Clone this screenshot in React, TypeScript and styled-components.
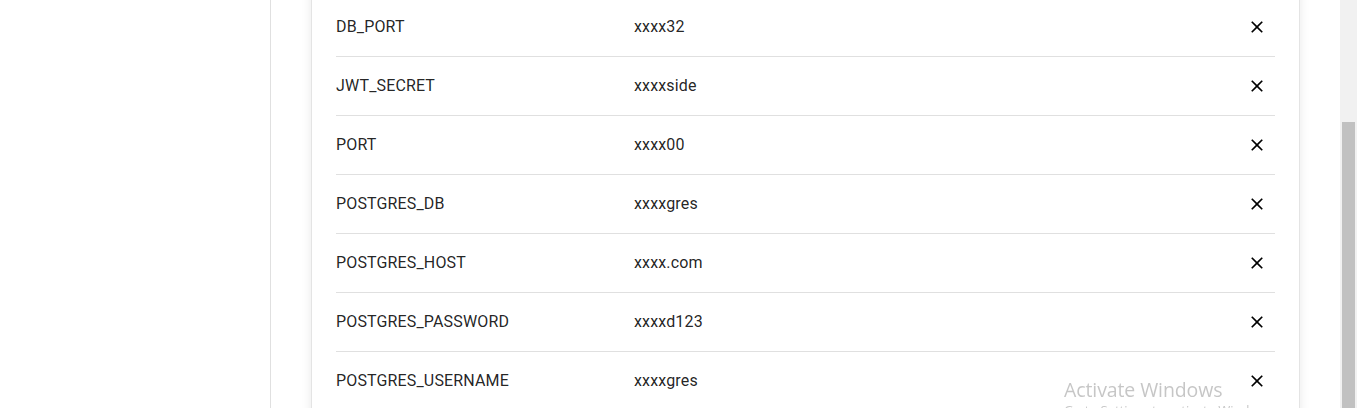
import React, { useLayoutEffect, useRef } from "react";
import styled, { createGlobalStyle } from "styled-components";
import { MdClose } from "react-icons/md";

const GlobalStyle = createGlobalStyle`
  html, body { margin: 0; padding: 0; background: #fff; overflow: hidden; }
  body { font-family: Roboto, "Liberation Sans", Arial, sans-serif; }
`;

const Page = styled.div`
  display: flex;
  height: 408px;
  width: 100%;
  background: #fff;
`;

const Sidebar = styled.aside`
  flex: 0 0 270px;
  border-right: 1px solid #e0e0e0;
  background: #fff;
`;

const ScrollArea = styled.main`
  flex: 1 1 auto;
  overflow: hidden;
  height: 100%;
`;

const Content = styled.div`
  padding: 40px;
`;

const Card = styled.section`
  background: #fff;
  border: 1px solid #e4e4e4;
  box-shadow: 0 0 10px rgba(0, 0, 0, 0.09);
  padding: 24px;
`;

const Row = styled.div`
  display: grid;
  grid-template-columns: 298px 1fr auto;
  align-items: center;
  height: 58px;
  border-bottom: 1px solid #e0e0e0;
`;

const Cell = styled.span`
  font-size: 16px;
  line-height: 24px;
  padding-bottom: 1px;
  color: rgba(0, 0, 0, 0.87);
  letter-spacing: 0.00938em;
`;

const IconButton = styled.button`
  display: inline-flex;
  align-items: center;
  justify-content: center;
  width: 36px;
  height: 36px;
  padding: 0;
  border: none;
  border-radius: 50%;
  background: transparent;
  color: #000;
  cursor: pointer;
`;

const ScrollTrack = styled.div`
  flex: 0 0 17px;
  height: 100%;
  background: #f1f1f1;
  display: flex;
  flex-direction: column;
  align-items: center;
`;

const ScrollThumb = styled.div<{ $top: number }>`
  margin-top: ${(p) => p.$top}px;
  width: 13px;
  flex: 1 1 auto;
  background: #c1c1c1;
`;

const Watermark = styled.div`
  position: fixed;
  left: 1064px;
  top: 378px;
  font-family: "Open Sans", "Noto Sans", sans-serif;
  color: rgba(120, 120, 120, 0.42);
  pointer-events: none;
  line-height: 1.2;
`;

const WatermarkTitle = styled.div`
  font-size: 19.5px;
  letter-spacing: -0.1px;
`;

const WatermarkSub = styled.div`
  font-size: 13px;
  margin-top: 2px;
`;

const vars: [string, string][] = [
  ["DB_PORT", "xxxx32"],
  ["JWT_SECRET", "xxxxside"],
  ["PORT", "xxxx00"],
  ["POSTGRES_DB", "xxxxgres"],
  ["POSTGRES_HOST", "xxxx.com"],
  ["POSTGRES_PASSWORD", "xxxxd123"],
  ["POSTGRES_USERNAME", "xxxxgres"],
];

export default function App() {
  const ref = useRef<HTMLElement>(null);
  useLayoutEffect(() => {
    if (ref.current) ref.current.scrollTop = 40 + 1 + 24 + 2;
  }, []);
  return (
    <>
      <GlobalStyle />
      <Page>
        <Sidebar />
        <ScrollArea ref={ref}>
          <Content>
            <Card>
              {vars.map(([k, v]) => (
                <Row key={k}>
                  <Cell>{k}</Cell>
                  <Cell>{v}</Cell>
                  <IconButton aria-label={`Delete ${k}`}>
                    <MdClose size={20} />
                  </IconButton>
                </Row>
              ))}
            </Card>
          </Content>
        </ScrollArea>
        <ScrollTrack>
          <ScrollThumb $top={122} />
        </ScrollTrack>
      </Page>
      <Watermark>
        <WatermarkTitle>Activate Windows</WatermarkTitle>
        <WatermarkSub>Go to Settings to activate Windows.</WatermarkSub>
      </Watermark>
    </>
  );
}
